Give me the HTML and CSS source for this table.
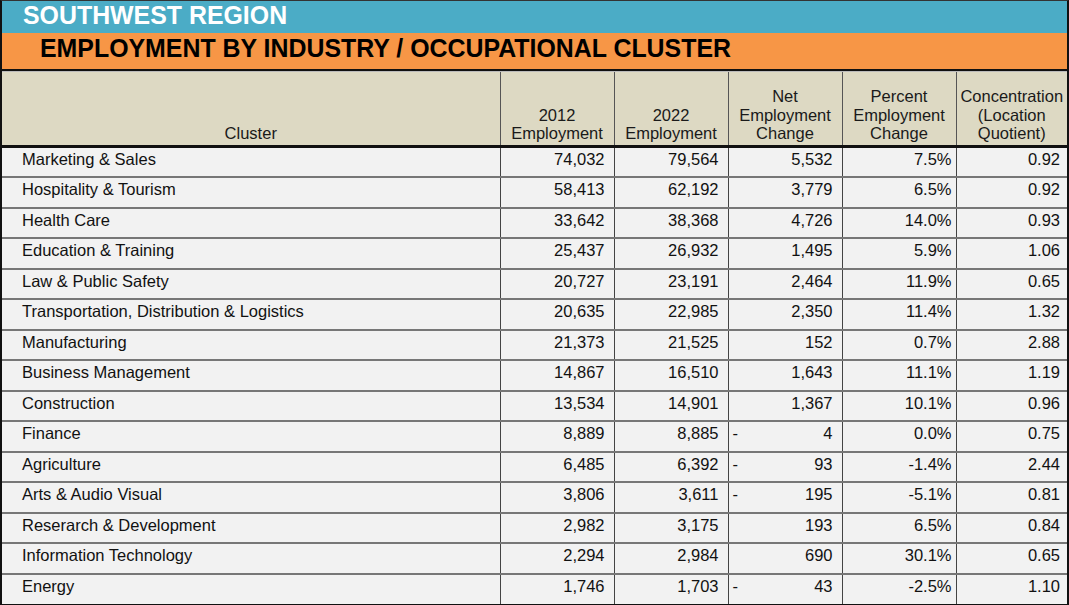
FILE: index.html
```html
<!DOCTYPE html>
<html>
<head>
<meta charset="utf-8">
<link rel="stylesheet" href="styles.css">
</head>
<body>
<div class="sheet">
  <div class="region">SOUTHWEST REGION</div>
  <div class="title">EMPLOYMENT BY INDUSTRY / OCCUPATIONAL CLUSTER</div>
  <table class="grid">
    <colgroup>
      <col class="c-cluster"><col class="c-num"><col class="c-num"><col class="c-num"><col class="c-num"><col class="c-last">
    </colgroup>
    <thead>
      <tr>
        <th>Cluster</th>
        <th>2012<br>Employment</th>
        <th>2022<br>Employment</th>
        <th>Net<br>Employment<br>Change</th>
        <th>Percent<br>Employment<br>Change</th>
        <th>Concentration<br>(Location<br>Quotient)</th>
      </tr>
    </thead>
    <tbody>
      <tr><td class="name">Marketing &amp; Sales</td><td class="n">74,032</td><td class="n">79,564</td><td class="net"><span class="v">5,532</span></td><td class="p">7.5%</td><td class="q">0.92</td></tr>
      <tr><td class="name">Hospitality &amp; Tourism</td><td class="n">58,413</td><td class="n">62,192</td><td class="net"><span class="v">3,779</span></td><td class="p">6.5%</td><td class="q">0.92</td></tr>
      <tr><td class="name">Health Care</td><td class="n">33,642</td><td class="n">38,368</td><td class="net"><span class="v">4,726</span></td><td class="p">14.0%</td><td class="q">0.93</td></tr>
      <tr><td class="name">Education &amp; Training</td><td class="n">25,437</td><td class="n">26,932</td><td class="net"><span class="v">1,495</span></td><td class="p">5.9%</td><td class="q">1.06</td></tr>
      <tr><td class="name">Law &amp; Public Safety</td><td class="n">20,727</td><td class="n">23,191</td><td class="net"><span class="v">2,464</span></td><td class="p">11.9%</td><td class="q">0.65</td></tr>
      <tr><td class="name">Transportation, Distribution &amp; Logistics</td><td class="n">20,635</td><td class="n">22,985</td><td class="net"><span class="v">2,350</span></td><td class="p">11.4%</td><td class="q">1.32</td></tr>
      <tr><td class="name">Manufacturing</td><td class="n">21,373</td><td class="n">21,525</td><td class="net"><span class="v">152</span></td><td class="p">0.7%</td><td class="q">2.88</td></tr>
      <tr><td class="name">Business Management</td><td class="n">14,867</td><td class="n">16,510</td><td class="net"><span class="v">1,643</span></td><td class="p">11.1%</td><td class="q">1.19</td></tr>
      <tr><td class="name">Construction</td><td class="n">13,534</td><td class="n">14,901</td><td class="net"><span class="v">1,367</span></td><td class="p">10.1%</td><td class="q">0.96</td></tr>
      <tr><td class="name">Finance</td><td class="n">8,889</td><td class="n">8,885</td><td class="net"><span class="dash">-</span><span class="v">4</span></td><td class="p">0.0%</td><td class="q">0.75</td></tr>
      <tr><td class="name">Agriculture</td><td class="n">6,485</td><td class="n">6,392</td><td class="net"><span class="dash">-</span><span class="v">93</span></td><td class="p">-1.4%</td><td class="q">2.44</td></tr>
      <tr><td class="name">Arts &amp; Audio Visual</td><td class="n">3,806</td><td class="n">3,611</td><td class="net"><span class="dash">-</span><span class="v">195</span></td><td class="p">-5.1%</td><td class="q">0.81</td></tr>
      <tr><td class="name">Reserarch &amp; Development</td><td class="n">2,982</td><td class="n">3,175</td><td class="net"><span class="v">193</span></td><td class="p">6.5%</td><td class="q">0.84</td></tr>
      <tr><td class="name">Information Technology</td><td class="n">2,294</td><td class="n">2,984</td><td class="net"><span class="v">690</span></td><td class="p">30.1%</td><td class="q">0.65</td></tr>
      <tr><td class="name">Energy</td><td class="n">1,746</td><td class="n">1,703</td><td class="net"><span class="dash">-</span><span class="v">43</span></td><td class="p">-2.5%</td><td class="q">1.10</td></tr>
    </tbody>
  </table>
</div>
</body>
</html>
```
FILE: styles.css
```css
* { box-sizing: border-box; }
html, body { margin: 0; padding: 0; background: #ffffff; }
body {
  font-family: "Liberation Sans", Arial, Helvetica, sans-serif;
  width: 1069px;
  height: 605px;
  overflow: hidden;
}
.sheet {
  width: 1069px;
  height: 605px;
  border-left: 2px solid #111;
  border-right: 2px solid #111;
  border-top: 1px solid #333;
  border-bottom: 2px solid #111;
  display: flex;
  flex-direction: column;
  background: #f2f2f2;
}
.region {
  height: 32px;
  background: #4bacc6;
  color: #ffffff;
  font-weight: bold;
  font-size: 24.9px;
  line-height: 28px;
  padding-left: 21px;
  flex: none;
}
.title {
  height: 38px;
  background: #f79646;
  color: #000;
  font-weight: bold;
  font-size: 24.9px;
  line-height: 31px;
  padding-left: 38px;
  border-bottom: 2px solid #111;
  flex: none;
}
.grid {
  width: 1065px;
  border-collapse: collapse;
  table-layout: fixed;
  font-size: 16.5px;
  color: #111;
}
.c-cluster { width: 498px; }
.c-num { width: 114px; }
.c-last { width: 111px; }
.grid thead th {
  background: #ddd9c3;
  font-weight: normal;
  color: #1a1a1a;
  height: 75px;
  vertical-align: bottom;
  text-align: center;
  line-height: 18.6px;
  padding: 0 0 2px 0;
  border-left: 1px solid #555;
  border-top: 1px solid #bbb;
  border-bottom: 3px solid #111;
}
.grid thead th:first-child { border-left: none; }
.grid tbody td {
  height: 30.5px;
  padding: 0 8px 5px 8px;
  background: #f2f2f2;
  border-left: 1px solid #444;
  border-bottom: 2px solid #777;
  white-space: nowrap;
  vertical-align: middle;
}
.grid tbody tr:last-child td { border-bottom: none; }
.grid tbody td.name { border-left: none; padding-left: 20px; text-align: left; }
.grid tbody td.n { text-align: right; padding-right: 9px; }
.grid tbody td.p { text-align: right; padding-right: 4px; }
.grid tbody td.q { text-align: right; padding-right: 7px; }
.grid tbody td.net { padding-left: 4px; padding-right: 9px; }
.net { text-align: right; }
.dash { float: left; }
.v { display: inline; }
```
